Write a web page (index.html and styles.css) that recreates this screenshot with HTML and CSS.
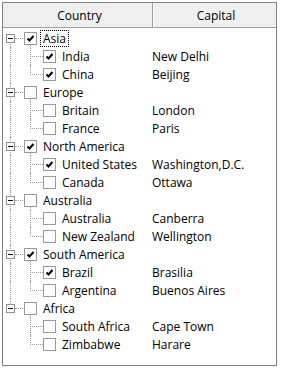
FILE: index.html
```html
<!DOCTYPE html>
<html lang="en">
<head>
    <meta charset="UTF-8">
    <title>Countries</title>
    <link rel="stylesheet" href="styles.css">
</head>
<body>
    <div class="grid">
        <div class="header">
            <div class="head-cell country">Country</div>
            <div class="head-cell capital-head">Capital</div>
        </div>

        <div class="tree">
            <!-- Asia -->
            <div class="row parent first">
                <div class="name">
                    <span class="rail"><span class="expander"></span></span>
                    <span class="check on open"><svg viewBox="0 0 11 11"><path d="M2.5 5.5l2 2 4-4.5"/></svg></span>
                    <span class="label focus">Asia</span>
                </div>
                <div class="capital"></div>
            </div>
            <div class="row child">
                <div class="name">
                    <span class="rail"></span><span class="rail2"></span>
                    <span class="check on"><svg viewBox="0 0 11 11"><path d="M2.5 5.5l2 2 4-4.5"/></svg></span>
                    <span class="label">India</span>
                </div>
                <div class="capital">New Delhi</div>
            </div>
            <div class="row child last-child">
                <div class="name">
                    <span class="rail"></span><span class="rail2"></span>
                    <span class="check on"><svg viewBox="0 0 11 11"><path d="M2.5 5.5l2 2 4-4.5"/></svg></span>
                    <span class="label">China</span>
                </div>
                <div class="capital">Beijing</div>
            </div>

            <!-- Europe -->
            <div class="row parent">
                <div class="name">
                    <span class="rail"><span class="expander"></span></span>
                    <span class="check open"></span>
                    <span class="label">Europe</span>
                </div>
                <div class="capital"></div>
            </div>
            <div class="row child">
                <div class="name">
                    <span class="rail"></span><span class="rail2"></span>
                    <span class="check"></span>
                    <span class="label">Britain</span>
                </div>
                <div class="capital">London</div>
            </div>
            <div class="row child last-child">
                <div class="name">
                    <span class="rail"></span><span class="rail2"></span>
                    <span class="check"></span>
                    <span class="label">France</span>
                </div>
                <div class="capital">Paris</div>
            </div>

            <!-- North America -->
            <div class="row parent">
                <div class="name">
                    <span class="rail"><span class="expander"></span></span>
                    <span class="check on open"><svg viewBox="0 0 11 11"><path d="M2.5 5.5l2 2 4-4.5"/></svg></span>
                    <span class="label">North America</span>
                </div>
                <div class="capital"></div>
            </div>
            <div class="row child">
                <div class="name">
                    <span class="rail"></span><span class="rail2"></span>
                    <span class="check on"><svg viewBox="0 0 11 11"><path d="M2.5 5.5l2 2 4-4.5"/></svg></span>
                    <span class="label">United States</span>
                </div>
                <div class="capital">Washington,D.C.</div>
            </div>
            <div class="row child last-child">
                <div class="name">
                    <span class="rail"></span><span class="rail2"></span>
                    <span class="check"></span>
                    <span class="label">Canada</span>
                </div>
                <div class="capital">Ottawa</div>
            </div>

            <!-- Australia -->
            <div class="row parent">
                <div class="name">
                    <span class="rail"><span class="expander"></span></span>
                    <span class="check open"></span>
                    <span class="label">Australia</span>
                </div>
                <div class="capital"></div>
            </div>
            <div class="row child">
                <div class="name">
                    <span class="rail"></span><span class="rail2"></span>
                    <span class="check"></span>
                    <span class="label">Australia</span>
                </div>
                <div class="capital">Canberra</div>
            </div>
            <div class="row child last-child">
                <div class="name">
                    <span class="rail"></span><span class="rail2"></span>
                    <span class="check"></span>
                    <span class="label">New Zealand</span>
                </div>
                <div class="capital">Wellington</div>
            </div>

            <!-- South America -->
            <div class="row parent">
                <div class="name">
                    <span class="rail"><span class="expander"></span></span>
                    <span class="check on open"><svg viewBox="0 0 11 11"><path d="M2.5 5.5l2 2 4-4.5"/></svg></span>
                    <span class="label">South America</span>
                </div>
                <div class="capital"></div>
            </div>
            <div class="row child">
                <div class="name">
                    <span class="rail"></span><span class="rail2"></span>
                    <span class="check on"><svg viewBox="0 0 11 11"><path d="M2.5 5.5l2 2 4-4.5"/></svg></span>
                    <span class="label">Brazil</span>
                </div>
                <div class="capital">Brasilia</div>
            </div>
            <div class="row child last-child">
                <div class="name">
                    <span class="rail"></span><span class="rail2"></span>
                    <span class="check"></span>
                    <span class="label">Argentina</span>
                </div>
                <div class="capital">Buenos Aires</div>
            </div>

            <!-- Africa (last group, rail stops here) -->
            <div class="row parent last">
                <div class="name">
                    <span class="rail"><span class="expander"></span></span>
                    <span class="check open"></span>
                    <span class="label">Africa</span>
                </div>
                <div class="capital"></div>
            </div>
            <div class="row child in-last">
                <div class="name">
                    <span class="rail"></span><span class="rail2"></span>
                    <span class="check"></span>
                    <span class="label">South Africa</span>
                </div>
                <div class="capital">Cape Town</div>
            </div>
            <div class="row child last-child in-last">
                <div class="name">
                    <span class="rail"></span><span class="rail2"></span>
                    <span class="check"></span>
                    <span class="label">Zimbabwe</span>
                </div>
                <div class="capital">Harare</div>
            </div>
        </div>
    </div>
</body>
</html>
```

FILE: styles.css
```css
* {
    margin: 0;
    padding: 0;
    box-sizing: border-box;
}

body {
    background: #fff;
    font-family: "Open Sans", "Noto Sans", sans-serif;
    font-size: 12px;
    color: #000;
}

.grid {
    margin: 2px 0 0 2px;
    width: 275px;
    height: 364px;
    border: 1px solid #828282;
    background: #fff;
}

/* Column header */
.header {
    display: flex;
    height: 25px;
}

.head-cell {
    display: flex;
    align-items: center;
    justify-content: center;
    background: #f0f0f0;
    border-bottom: 1px solid #a0a0a0;
}

.country {
    width: 150px;
    border-right: 1px solid #a0a0a0;
    padding-left: 4px;
}

.capital-head {
    flex: 1;
    border-left: 1px solid #fff;
    padding-left: 2px;
}

/* Tree rows */
.tree {
    padding-top: 1px;
}

.row {
    display: grid;
    grid-template-columns: 149px 1fr;
    height: 18px;
}

.name {
    display: flex;
    align-items: center;
    height: 18px;
}

.capital {
    display: flex;
    align-items: center;
    white-space: nowrap;
}

.rail,
.rail2 {
    position: relative;
    flex: none;
    width: 20px;
    height: 18px;
}

/* level one dotted line at x=10 */
.rail::before {
    content: "";
    position: absolute;
    left: 7px;
    top: 0;
    height: 18px;
    border-left: 1px dotted #a0a0a0;
}

.first .rail::before {
    top: 9px;
    height: 9px;
}

.last .rail::before {
    height: 9px;
}

.in-last .rail::before {
    display: none;
}

/* connector from expander to checkbox */
.parent .rail::after {
    content: "";
    position: absolute;
    left: 12px;
    top: 9px;
    width: 8px;
    border-top: 1px dotted #a0a0a0;
}

.expander {
    position: absolute;
    left: 3px;
    top: 5px;
    width: 9px;
    height: 9px;
    border: 1px solid #919191;
    background: #fff;
    z-index: 1;
}

.expander::after {
    content: "";
    position: absolute;
    left: 1px;
    top: 3px;
    width: 5px;
    border-top: 1px solid #000;
}

/* level two dotted line at x=30 */
.rail2::before {
    content: "";
    position: absolute;
    left: 7px;
    top: 0;
    height: 18px;
    border-left: 1px dotted #a0a0a0;
}

.last-child .rail2::before {
    height: 10px;
}

.rail2::after {
    content: "";
    position: absolute;
    left: 9px;
    top: 9px;
    width: 11px;
    border-top: 1px dotted #a0a0a0;
}

.check {
    position: relative;
    flex: none;
    width: 13px;
    height: 13px;
    margin-left: 1px;
    border: 1px solid #9a9a9a;
    background: #fff;
}

.child .check {
    margin-left: 0;
}

.check svg {
    display: block;
    width: 11px;
    height: 11px;
}

.check svg path {
    fill: none;
    stroke: #000;
    stroke-width: 2;
}

/* short line under an expanded parent's checkbox */
.open::after {
    content: "";
    position: absolute;
    left: 5px;
    top: 12px;
    height: 3px;
    border-left: 1px dotted #a0a0a0;
}

.label {
    margin-left: 3px;
    padding: 0 2px;
    border: 1px solid transparent;
    line-height: 15px;
    white-space: nowrap;
}

.focus {
    border: 1px dotted #000;
}
```
